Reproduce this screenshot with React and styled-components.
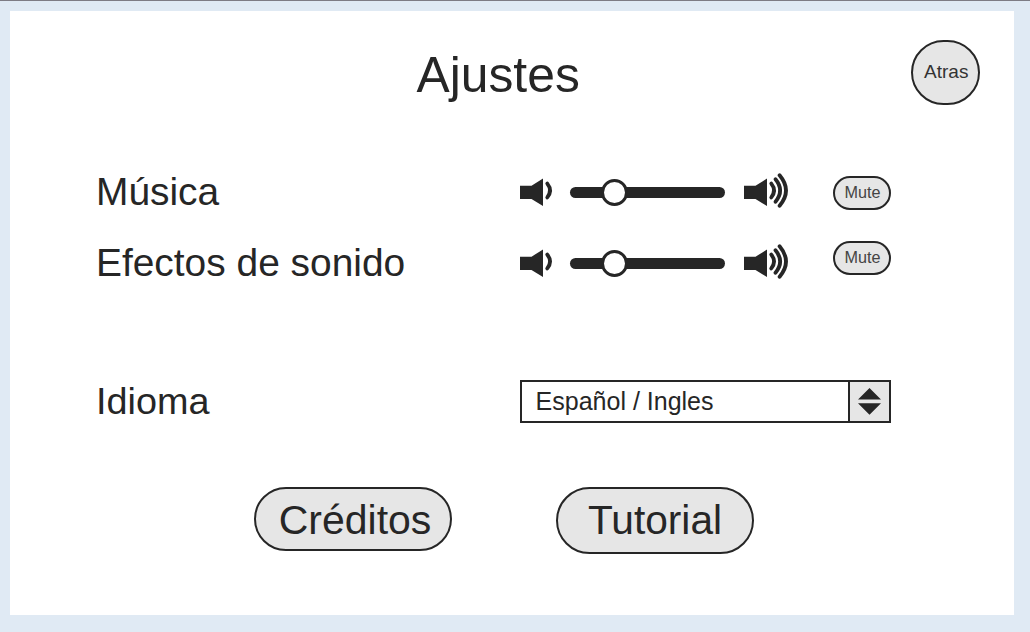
import React from "react";
import styled, { createGlobalStyle } from "styled-components";

const ink = "#262626";
const fill = "#e6e6e6";

const GlobalStyle = createGlobalStyle`
  * { box-sizing: border-box; }
  body {
    margin: 0;
    background: #e0eaf4;
    color: ${ink};
    font-family: "Liberation Sans", Arial, sans-serif;
  }
  button { font-family: inherit; color: inherit; }
`;

const Page = styled.div`
  width: 1030px;
  height: 632px;
  padding: 10px 16px 17px 10px;
  border-top: 1px solid #7e7c84;
`;

const Panel = styled.main`
  height: 604px;
  background: #fff;
`;

const Header = styled.header`
  display: flex;
  justify-content: space-between;
  align-items: flex-start;
  height: 146px;
  padding: 29px 34px 0 406.5px;
`;

const Title = styled.h1`
  margin: 0;
  font-weight: 400;
  font-size: 49.8px;
  line-height: 70px;
`;

const Pill = styled.button`
  display: flex;
  justify-content: center;
  flex: none;
  width: ${(p) => p.$w}px;
  height: ${(p) => p.$h}px;
  margin: 0;
  padding: 0 0 0 ${(p) => p.$shift || 0}px;
  border: 2px solid ${ink};
  border-radius: ${(p) => p.$r || p.$h / 2}px;
  background: ${fill};
  font-size: ${(p) => p.$size}px;
  line-height: ${(p) => p.$line}px;
  white-space: nowrap;
`;

const SmallPill = styled(Pill)`
  color: #333;
`;

const MutePill = styled(Pill)`
  color: #444;
  margin-top: ${(p) => p.$top}px;
`;

const Row = styled.section`
  display: grid;
  grid-template-columns: 424px 50px 174px 89px 58px;
  align-items: start;
  height: ${(p) => p.$h}px;
  padding-left: 86px;
`;

const Label = styled.span`
  font-size: ${(p) => p.$size || 38.9}px;
  line-height: 69px;
  white-space: nowrap;
`;

const SpeakerSvg = styled.svg`
  display: block;
  margin-top: 15px;
`;

const Track = styled.div`
  display: flex;
  align-items: center;
  width: 155px;
  height: 11px;
  margin-top: 30px;
  padding-left: 31px;
  border-radius: 6px;
  background: ${ink};
`;

const Knob = styled.div`
  flex: none;
  width: 27px;
  height: 27px;
  border: 3px solid ${ink};
  border-radius: 50%;
  background: #fff;
`;

const Select = styled.div`
  display: flex;
  grid-column: 2 / -1;
  width: 371px;
  height: 43px;
  margin-top: 13px;
  border: 2px solid ${ink};
`;

const SelectValue = styled.span`
  flex: 1;
  padding-left: 13.6px;
  font-size: 25px;
  line-height: 39px;
`;

const Stepper = styled.span`
  width: 41px;
  border-left: 2px solid ${ink};
  background: ${fill};
`;

const Actions = styled.footer`
  display: flex;
  align-items: flex-start;
  gap: 104px;
  padding-left: 244px;
`;

function Speaker({ loud }) {
  return (
    <SpeakerSvg width="46" height="40" viewBox="0 0 46 40">
      <path d="M0 13.7H11.5L23 6.5V34L11.5 27H0Z" fill={ink} />
      <g fill="none" stroke={ink} strokeWidth="3.8" strokeLinecap="round">
        <path d="M27.3 11.6Q32.8 18.5 27.3 25.4" />
        {loud && (
          <>
            <path d="M31.5 7.3Q40.8 18.5 31.5 29.7" />
            <path d="M35.6 3.3Q48.4 18.5 35.6 33.7" />
          </>
        )}
      </g>
    </SpeakerSvg>
  );
}

function SoundRow({ label, height, muteTop }) {
  return (
    <Row $h={height}>
      <Label>{label}</Label>
      <Speaker />
      <Track>
        <Knob />
      </Track>
      <Speaker loud />
      <MutePill $w={58} $h={34} $size={16.2} $line={29} $top={muteTop} $shift={1}>
        Mute
      </MutePill>
    </Row>
  );
}

export default function App() {
  return (
    <>
      <GlobalStyle />
      <Page>
        <Panel>
          <Header>
            <Title>Ajustes</Title>
            <SmallPill $w={69} $h={65} $r={33} $size={19} $line={59} $shift={1.5}>
              Atras
            </SmallPill>
          </Header>
          <SoundRow label="Música" height={71} muteTop={19} />
          <SoundRow label="Efectos de sonido" height={139} muteTop={13} />
          <Row $h={120}>
            <Label $size={37.8}>Idioma</Label>
            <Select>
              <SelectValue>Español / Ingles</SelectValue>
              <Stepper>
                <svg width="39" height="39" viewBox="0 0 39 39" fill={ink}>
                  <path d="M19.5 6L31 17.6H8ZM8 21.2H31L19.5 32.7Z" />
                </svg>
              </Stepper>
            </Select>
          </Row>
          <Actions>
            <Pill $w={198} $h={64} $size={41} $line={62} $shift={4}>
              Créditos
            </Pill>
            <Pill $w={198} $h={67} $size={40.7} $line={62}>
              Tutorial
            </Pill>
          </Actions>
        </Panel>
      </Page>
    </>
  );
}
